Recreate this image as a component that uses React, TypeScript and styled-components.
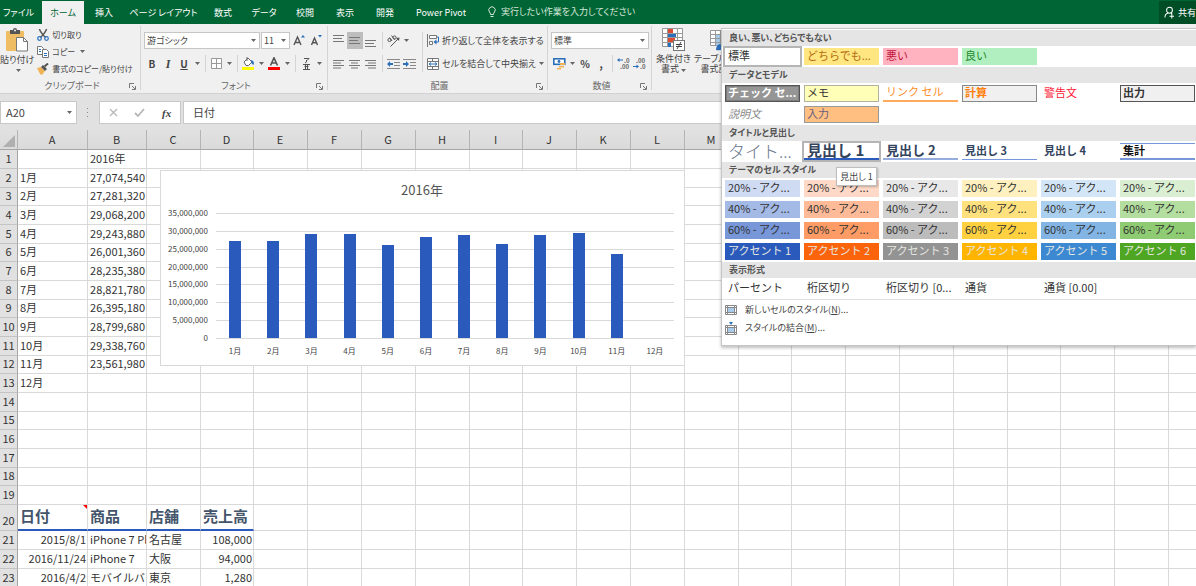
import React from "react";
import styled, { createGlobalStyle, css } from "styled-components";

const Global = createGlobalStyle`
  *, *::before, *::after { box-sizing: border-box; }
  body { margin: 0; }
  body, button, input, select {
    font-family: "Noto Sans CJK JP", "Noto Sans", sans-serif;
    color: #444;
  }
  button { margin: 0; padding: 0; border: 0; background: none; }
`;

/* ---------- frame ---------- */

const Window = styled.div`
  display: flex;
  flex-direction: column;
  height: 100vh;
  overflow: hidden;
  position: relative;
  background: #fff;
`;

const uiText = css`
  font-size: 9px;
  line-height: 12px;
  font-feature-settings: "palt";
  white-space: nowrap;
`;

const TabBar = styled.nav`
  display: flex;
  align-items: stretch;
  height: 24px;
  flex: none;
  background: #006534;
`;

const Tab = styled.button<{ $active?: boolean; $w: number }>`
  ${uiText}
  flex: none;
  width: ${(p) => p.$w}px;
  margin-top: 1px;
  text-align: center;
  color: ${(p) => (p.$active ? "#006534" : "#fff")};
  background: ${(p) => (p.$active ? "#f0f0f0" : "transparent")};
`;

const FileTab = styled(Tab)`
  padding-right: 5px;
`;

const TellMe = styled.label`
  ${uiText}
  display: flex;
  align-items: center;
  flex: 1;
  gap: 5px;
  margin-left: 11px;
  color: #d5e8dc;
`;

const TellInput = styled.input`
  ${uiText}
  flex: 1;
  min-width: 0;
  padding: 0;
  border: 0;
  outline: 0;
  background: transparent;
  &::placeholder { color: #d5e8dc; opacity: 1; }
`;

const Share = styled.button`
  ${uiText}
  display: flex;
  align-items: center;
  gap: 3px;
  width: 37px;
  margin-top: 1px;
  padding-left: 5px;
  overflow: hidden;
  color: #fff;
  background: #004d26;
`;

/* ---------- ribbon ---------- */

const Ribbon = styled.div`
  display: flex;
  flex: none;
  height: 70px;
  background: #f0f0f0;
  border-bottom: 1px solid #d2d2d2;
`;

const Group = styled.section<{ $w?: number }>`
  position: relative;
  display: flex;
  flex-direction: column;
  justify-content: space-between;
  flex: none;
  ${(p) => p.$w && `width: ${p.$w}px;`}
  padding-left: 3px;
  &::after {
    content: "";
    position: absolute;
    top: 2px;
    right: 0;
    bottom: 3px;
    width: 1px;
    background: #d4d4d4;
  }
`;

const Rows = styled.div`
  display: flex;
  flex-direction: column;
  gap: 6px;
  padding-top: 8px;
`;

const Row = styled.div<{ $gap?: number }>`
  display: flex;
  align-items: center;
  height: 17px;
  gap: ${(p) => p.$gap ?? 0}px;
`;

const Columns = styled.div`
  display: flex;
`;

const IconZone = styled(Rows)`
  width: 88px;
`;

const Foot = styled.footer`
  ${uiText}
  display: grid;
  grid-template-columns: 12px 1fr 12px;
  align-items: center;
  height: 14px;
  text-align: center;
  color: #666;
`;

const FootLabel = styled.span`
  grid-column: 2;
`;

const Tool = styled.button<{ $on?: boolean }>`
  display: flex;
  align-items: center;
  justify-content: center;
  flex: none;
  width: 16px;
  height: 17px;
  font-size: 10px;
  line-height: 16px;
  background: ${(p) => (p.$on ? "#bdbdbd" : "transparent")};
`;

const BoldTool = styled(Tool)`font-weight: 700;`;
const ItalicTool = styled(BoldTool)`
  font-family: "Liberation Serif", serif;
  font-style: italic;
  font-size: 12px;
`;
const UnderTool = styled(BoldTool)`text-decoration: underline;`;

const ArrowTool = styled(Tool)`width: 10px;`;

const Sep = styled.span`
  flex: none;
  width: 6px;
  height: 17px;
  background: linear-gradient(#d4d4d4, #d4d4d4) 3px 0 / 1px 100% no-repeat;
`;

const TallSep = styled(Sep)`
  height: 40px;
  margin-top: 8px;
`;

const TextTool = styled.button`
  ${uiText}
  display: flex;
  align-items: center;
  gap: 3px;
  height: 17px;
  padding: 0 0 0 2px;
`;

const ClipTool = styled(TextTool)`
  font-size: 8px;
`;

const SelectBox = styled.span<{ $w: number }>`
  position: relative;
  display: flex;
  align-items: center;
  width: ${(p) => p.$w}px;
  height: 17px;
  background: #fff;
  border: 1px solid #c6c6c6;
  & > svg { position: absolute; right: 3px; pointer-events: none; }
`;

const Select = styled.select`
  ${uiText}
  appearance: none;
  width: 100%;
  height: 15px;
  padding: 0 0 0 2px;
  border: 0;
  outline: 0;
  background: transparent;
`;

const BigTool = styled.button`
  ${uiText}
  display: flex;
  flex-direction: column;
  align-items: center;
  line-height: 10px;
  padding-top: 4px;
  & > svg { margin-bottom: 3px; }
`;

const BigArrow = styled.span`
  display: inline-flex;
  align-items: center;
  height: 10px;
  padding-left: 2px;
`;

const Clipboard = styled.div`
  display: flex;
  margin-left: -3px;
  gap: 1px;
`;

const ClipList = styled.div`
  display: flex;
  flex-direction: column;
  padding-top: 2px;
`;

const StylesGroup = styled.div`
  display: flex;
  align-items: flex-start;
  gap: 3px;
  padding-left: 4px;
`;

/* ---------- formula bar ---------- */

const FormulaBar = styled.div`
  display: flex;
  flex: none;
  align-items: center;
  height: 36px;
  padding-top: 1px;
  background: #e1e1e1;
`;

const NameBox = styled.label`
  display: flex;
  align-items: center;
  justify-content: space-between;
  width: 77px;
  height: 23px;
  padding-right: 4px;
  background: #fff;
  border: 1px solid #c8c8c8;
`;

const BarInput = styled.input`
  min-width: 0;
  flex: 1;
  height: 21px;
  padding: 0 5px 1px;
  border: 0;
  outline: 0;
  font-size: 11px;
  background: transparent;
`;

const Dots = styled.span`
  display: flex;
  justify-content: center;
  width: 22px;
`;

const FxBox = styled.div`
  display: flex;
  align-items: center;
  justify-content: space-around;
  width: 82px;
  height: 23px;
  margin-right: 2px;
  background: #fff;
  border: 1px solid #c8c8c8;
`;

const Fx = styled(Tool)`
  font-family: "Liberation Serif", serif;
  font-style: italic;
  font-weight: 700;
  font-size: 11px;
`;

const FormulaBox = styled.label`
  display: flex;
  flex: 1;
  height: 23px;
  padding-left: 4px;
  background: #fff;
  border: 1px solid #c8c8c8;
`;

/* ---------- sheet ---------- */

const Sheet = styled.main`
  position: relative;
  flex: 1;
  min-height: 0;
  overflow: hidden;
`;

const Grid = styled.table`
  table-layout: fixed;
  width: 0;
  border-collapse: separate;
  border-spacing: 0;
  font-size: 11px;
  line-height: 15px;
  color: #333;
`;

const Col = styled.col<{ $w: number }>`
  width: ${(p) => p.$w}px;
`;

const ColHead = styled.th`
  height: 20px;
  padding: 0 1px 1px 0;
  font-weight: 400;
  color: #333;
  background: linear-gradient(#e1e1e1, #dadada);
  border-right: 1px solid #b4b4b4;
  border-bottom: 1px solid #a6a6a6;
`;

const Corner = styled(ColHead)`
  vertical-align: bottom;
  text-align: right;
  line-height: 0;
`;

const Tr = styled.tr<{ $h: number }>`
  height: ${(p) => p.$h}px;
`;

const RowHead = styled.th`
  padding: 0 0 2px;
  font-weight: 400;
  vertical-align: bottom;
  background: #e1e1e1;
  border-right: 1px solid #a6a6a6;
  border-bottom: 1px solid #c4c4c4;
`;

const Td = styled.td<{ $num?: boolean; $head?: boolean }>`
  position: relative;
  padding: 0 1px 2px ${(p) => (p.$num ? 0 : 2)}px;
  overflow: hidden;
  white-space: nowrap;
  vertical-align: bottom;
  text-align: ${(p) => (p.$num ? "right" : "left")};
  border-right: 1px solid #d9d9d9;
  border-bottom: 1px solid #d9d9d9;
  ${(p) =>
    p.$head &&
    css`
      font-size: 15px;
      line-height: 22px;
      font-weight: 700;
      color: #44546a;
      border-bottom: 2px solid #2a5bbc;
    `}
`;

const Note = styled.span`
  position: absolute;
  top: 0;
  right: 0;
  border-top: 4px solid #f00;
  border-left: 4px solid transparent;
`;

const ChartFrame = styled.figure`
  position: absolute;
  left: 160px;
  top: 40px;
  width: 525px;
  height: 196px;
  margin: 0;
  background: #fff;
  border: 1px solid #d9d9d9;
`;

/* ---------- style gallery ---------- */

const Gallery = styled.aside`
  position: absolute;
  top: 28px;
  right: 0;
  width: 475px;
  padding-top: 1px;
  background: #fff;
  border: 1px solid #c6c6c6;
  border-right: 0;
  box-shadow: 0 2px 3px rgba(0, 0, 0, 0.25);
`;

const Band = styled.h2`
  ${uiText}
  margin: 0;
  height: 16px;
  line-height: 15px;
  padding-left: 7px;
  font-weight: 700;
  color: #555;
  background: #e5e5e5;
`;

const Swatches = styled.div`
  display: grid;
  grid-template-columns: repeat(6, 75px);
  grid-auto-rows: 17px;
  gap: 4px;
  padding: 2px 0 2px 3px;
`;

type Look = {
  $bg?: string;
  $fg?: string;
  $border?: string;
  $top?: string;
  $bottom?: string;
  $bw?: number;
  $size?: number;
  $bold?: boolean;
  $italic?: boolean;
  $light?: boolean;
  $ring?: boolean;
};

const Swatch = styled.button<Look>`
  height: 17px;
  padding: 0 0 2px 3px;
  overflow: ${(p) => (p.$ring ? "visible" : "hidden")};
  display: flex;
  align-items: center;
  white-space: nowrap;
  text-align: left;
  font-size: ${(p) => p.$size ?? 11}px;
  line-height: 15px;
  font-weight: ${(p) => (p.$bold ? 700 : p.$light ? 300 : 400)};
  font-style: ${(p) => (p.$italic ? "italic" : "normal")};
  color: ${(p) => p.$fg ?? "#333"};
  background: ${(p) => p.$bg ?? "transparent"};
  ${(p) => p.$border && `border: 1px solid ${p.$border}; padding-left: 2px;`}
  ${(p) => p.$border && p.$bold && p.$bg === "#969696" && `box-shadow: inset 0 0 0 1px #7d7d7d;`}
  ${(p) => p.$top && `border-top: 1px solid ${p.$top};`}
  ${(p) => p.$bottom && `border-bottom: ${p.$bw ?? 2}px solid ${p.$bottom};`}
  ${(p) => p.$ring && `outline: 2px solid #b5b5b5;`}
`;

const MenuList = styled.div`
  display: flex;
  flex-direction: column;
  padding: 1px 0 8px;
  border-top: 1px solid #e1e1e1;
`;

const MenuItem = styled.button`
  ${uiText}
  display: flex;
  align-items: center;
  gap: 8px;
  height: 18px;
  padding-left: 3px;
`;

const Tip = styled.span`
  ${uiText}
  position: absolute;
  left: 114px;
  top: 138px;
  width: 41px;
  height: 19px;
  line-height: 17px;
  text-align: center;
  background: #fff;
  border: 1px solid #bebebe;
  box-shadow: 1px 1px 2px rgba(0, 0, 0, 0.25);
`;

/* ---------- icons ---------- */

const Caret = () => (
  <svg width="5" height="3" viewBox="0 0 5 3"><path d="M0 0h5L2.5 3z" fill="#666" /></svg>
);

const Launcher = () => (
  <svg width="7" height="7" viewBox="0 0 7 7" fill="none" stroke="#777">
    <path d="M.5 5V.5H5M3 3l3 3M6.500 3v3.500H3" />
  </svg>
);

const Lines = ({ rows, top, align = "l" }: { rows: number[]; top: number; align?: string }) => (
  <svg width="12" height="14" viewBox="0 0 12 14">
    {rows.map((w, i) => (
      <rect key={i} x={align === "l" ? 0 : align === "c" ? (11 - w) / 2 : 11 - w} y={top + i * 3 - (rows.length > 3 ? i * 0.5 : 0)} width={w} height="1" fill="#777" />
    ))}
  </svg>
);

const Indent = ({ out }: { out?: boolean }) => (
  <svg width="13" height="12" viewBox="0 0 13 12">
    <path d="M0 1.500h13M7 4.500h6M7 7.500h6M0 10.500h13" stroke="#888" />
    <path d={out ? "M0 6l3-3v2h3v2H3v2z" : "M6 6L3 3v2H0v2h3v2z"} fill="#2a6fba" />
  </svg>
);

const PasteIcon = () => (
  <svg width="22" height="24" viewBox="0 0 22 24">
    <rect x="0" y="3" width="18" height="20" rx="1" fill="#efbd63" />
    <path d="M4 2h3a2 2 0 0 1 4 0h3v4H4z" fill="#555" />
    <circle cx="9" cy="2.400" r="1" fill="#f0f0f0" />
    <path d="M10.500 9.500h7l4 4v9.500h-11z" fill="#fff" stroke="#777" />
    <path d="M17.500 9.500v4h4" fill="none" stroke="#777" />
  </svg>
);

const CutIcon = () => (
  <svg width="12" height="12" viewBox="0 0 12 12" fill="none">
    <path d="M2.500 0C3 3 6 6 8.500 8.500M9.500 0C9 3 6 6 3.500 8.500" stroke="#555" strokeWidth="1.500" />
    <circle cx="2.500" cy="9.500" r="1.800" stroke="#2a6fba" strokeWidth="1.200" />
    <circle cx="9.500" cy="9.500" r="1.800" stroke="#2a6fba" strokeWidth="1.200" />
  </svg>
);

const CopyIcon = () => (
  <svg width="12" height="12" viewBox="0 0 12 12" fill="#fff" stroke="#777">
    <path d="M.5 .5h4l2 2v6h-6z" />
    <path d="M5.500 3.500h4l2 2v6h-6z" />
    <path d="M2 3.500h2M2 5.500h2M7 7.500h3M7 9.500h3" stroke="#2a6fba" />
  </svg>
);

const BrushIcon = () => (
  <svg width="12" height="12" viewBox="0 0 12 12">
    <path d="M0 5l4-1 4 4-3 4-2-1z" fill="#efb356" />
    <path d="M4 4l2-2 4 4-2 2z" fill="#555" />
    <path d="M7.500 3.500L11 .5" stroke="#555" strokeWidth="2" />
  </svg>
);

const GrowA = ({ small }: { small?: boolean }) => (
  <svg width="12" height="14" viewBox="0 0 12 14">
    {small ? (
      <path d="M1.500 11L4.500 4l3 7M2.500 8.700h4" fill="none" stroke="#555" strokeWidth="1.400" />
    ) : (
      <path d="M1 11L4.500 3L8 11M2.300 8.500h4.500" fill="none" stroke="#555" strokeWidth="1.400" />
    )}
    <path d={small ? "M8 1h4l-2 2.500z" : "M8 3.500h4l-2-2.500z"} fill="#2a6fba" />
  </svg>
);

const BorderIcon = () => (
  <svg width="11" height="11" viewBox="0 0 11 11" fill="#fff" stroke="#999">
    <path d="M.5 .5h10v10H.5zM5.500 .5v10M.5 5.500h10" />
  </svg>
);

const FillIcon = () => (
  <svg width="13" height="13" viewBox="0 0 13 13">
    <path d="M2 5l4-4 4 4-3.500 3.500H4z" fill="#fff" stroke="#666" />
    <path d="M5 4V0" stroke="#666" />
    <path d="M9 3q4 1 2.500 5Q9 7 9 3z" fill="#2a6fba" />
    <rect y="10" width="12" height="3" fill="#ff0" />
  </svg>
);

const FontColorIcon = () => (
  <svg width="12" height="13" viewBox="0 0 12 13">
    <path d="M2.500 8.500L6 .8l3.500 7.700M3.800 6h4.400" fill="none" stroke="#555" strokeWidth="1.600" />
    <rect y="10" width="12" height="3" fill="#f00" />
  </svg>
);

const RubyIcon = () => (
  <svg width="7" height="13" viewBox="0 0 7 13" fill="none" stroke="#555">
    <path d="M1 1.500h5L4 3.500M3.500 3v2L2 6M0 7.500h7M1.500 9.500h4M0 12.500h7M2.500 7.500v5M4.500 7.500v5" />
  </svg>
);

const OrientIcon = () => (
  <svg width="13" height="13" viewBox="0 0 13 13" fill="none" stroke="#555">
    <circle cx="2.500" cy="6" r="1.600" />
    <path d="M2.500 3.500L5 7M4.500 1.500L8 6" />
    <circle cx="7.500" cy="3.500" r="1.600" />
    <path d="M3.500 12.500l8-8" />
    <path d="M12.500 3.500L12 7 9 4z" fill="#555" stroke="none" />
  </svg>
);

const WrapIcon = () => (
  <svg width="12" height="13" viewBox="0 0 12 13" fill="none">
    <path d="M.5 0v13" stroke="#777" />
    <path d="M2.500 1.500h7v3h-7z" fill="#fff" stroke="#777" />
    <path d="M2.500 7.500h3v3h-3z" fill="#fff" stroke="#777" />
    <path d="M10 3h1.500v5H8" stroke="#2a6fba" />
    <path d="M9.500 5.500L6.500 8l3 2.500z" fill="#2a6fba" />
  </svg>
);

const MergeIcon = () => (
  <svg width="12" height="12" viewBox="0 0 12 12" fill="none">
    <path d="M.5 .5h11v11H.5z" fill="#fff" />
    <path d="M.5 .5h11v11H.5zM.5 3.500h11M.5 8.500h11M5.500 .5v3M5.500 8.500v3" stroke="#777" />
    <path d="M2 6h8M4 4.500L2 6l2 1.500M8 4.500L10 6 8 7.500" stroke="#2a6fba" />
  </svg>
);

const MoneyIcon = () => (
  <svg width="13" height="13" viewBox="0 0 13 13">
    <rect x=".8" y="1.800" width="11" height="5.500" fill="#fff" stroke="#2a6fba" strokeWidth="1.600" />
    <circle cx="6" cy="4.500" r="1.400" fill="#2a6fba" />
    <path d="M7 6h5v2H7zM6 9h5v1.500H6zM4 11h4v1.500H4z" fill="#efb356" />
  </svg>
);

const DigitsText = styled.text`
  font: 700 6px "Noto Sans CJK JP", sans-serif;
  fill: #666;
`;

const Decimal = ({ inc }: { inc?: boolean }) => (
  <svg width="13" height="13" viewBox="0 0 13 13">
    <DigitsText x={inc ? 7 : 3} y="6">{inc ? ".0" : ".00"}</DigitsText>
    <DigitsText x={inc ? 3 : 7} y="12">{inc ? ".00" : ".0"}</DigitsText>
    {inc ? (
      <path d="M0 3l2.500-2v1.500H6v1H2.500V5z" fill="#2a6fba" />
    ) : (
      <path d="M6 9.500L3.500 7.500V9H0v1h3.500v1.500z" fill="#2a6fba" />
    )}
  </svg>
);

const CondIcon = () => (
  <svg width="23" height="23" viewBox="0 0 23 23">
    <path d="M.5 .5h20v18H.5zM5.500 .5v18M15.500 .5v18M.5 5.500h20M.5 9.500h20M.5 14.500h20" fill="#fff" stroke="#999" />
    <rect x="6" y="1" width="5" height="4" fill="#dc4b32" />
    <rect x="6" y="6" width="8" height="3" fill="#2a6fba" />
    <rect x="6" y="10" width="7" height="4" fill="#dc4b32" />
    <rect x="6" y="15" width="3" height="4" fill="#2a6fba" />
    <rect x="11.500" y="12.500" width="11" height="10" fill="#fff" stroke="#777" />
    <path d="M14 16.500h6M14 18.500h6M19 14l-4 7" stroke="#444" fill="none" />
  </svg>
);

const TableIcon = () => (
  <svg width="24" height="23" viewBox="0 0 24 23">
    <path d="M.5 2.500h20v15H.5z" fill="#fff" />
    <path d="M5 6h16v12H5z" fill="#a9cbea" />
    <path d="M.5 2.500h20v15H.5zM5.500 2.500v15M10.500 2.500v15M15.500 2.500v15M.5 6.500h20M.5 10.500h20M.5 14.500h20" fill="none" stroke="#999" />
    <path d="M6 22q0-5 4-6l4 4q-2 3-8 2z" fill="#2a6fba" />
    <path d="M12 17l9-9" stroke="#666" strokeWidth="2" />
  </svg>
);

const BulbIcon = () => (
  <svg width="8" height="12" viewBox="0 0 8 12" fill="none" stroke="#d5e8dc">
    <path d="M2.500 8.500Q2.500 7 1.500 6A3.200 3.200 0 1 1 6.500 6Q5.500 7 5.500 8.500zM2.500 10.500h3" />
  </svg>
);

const PersonIcon = () => (
  <svg width="12" height="13" viewBox="0 0 12 13" fill="none" stroke="#fff" strokeWidth="1.100">
    <circle cx="6" cy="4" r="3.200" />
    <path d="M1 12q0-4 3.500-5M7.500 7L9 8M6 10.500h5M8.500 8v5" />
  </svg>
);

const NewStyleIcon = () => (
  <svg width="12" height="10" viewBox="0 0 12 10" fill="#fff" stroke="#888">
    <path d="M.5 .5h11v9H.5zM.5 2.500h11M.5 7.500h11M2.500 .5v9M9.500 .5v9" />
    <path d="M3 3h6v4H3z" fill="#a9cbea" stroke="none" />
  </svg>
);

const MergeStyleIcon = () => (
  <svg width="12" height="13" viewBox="0 0 12 13" fill="#fff" stroke="#888">
    <path d="M.5 3.500h11v9H.5zM.5 5.500h11M.5 10.500h11M2.500 3.500v9M9.500 3.500v9" />
    <path d="M3 6h6v4H3z" fill="#a9cbea" stroke="none" />
    <path d="M4 0h4L6 3z" fill="#2a6fba" stroke="none" />
  </svg>
);

/* ---------- chart ---------- */

const sales = [27074540, 27281320, 29068200, 29243880, 26001360, 28235380, 28821780, 26395180, 28799680, 29338760, 23561980];

const AxisText = styled.text`
  font: 400 8px "Noto Sans CJK JP", sans-serif;
  fill: #444;
`;
const ChartTitle = styled.text`
  font: 400 13px "Noto Sans CJK JP", sans-serif;
  fill: #555;
`;

const Chart = () => {
  const x0 = 55;
  const base = 167;
  const plotH = 125;
  const step = 458 / 12;
  return (
    <svg width="523" height="194" viewBox="0 0 523 194" role="img" aria-label="2016年">
      <ChartTitle x="261" y="24" textAnchor="middle">2016年</ChartTitle>
      {Array.from({ length: 8 }, (_, i) => {
        const y = Math.round(base - (i * plotH) / 7);
        return (
          <g key={i}>
            <rect x={x0} y={y} width="458" height="1" fill="#d9d9d9" />
            <AxisText x="47" y={y + 3} textAnchor="end">{(i * 5000000).toLocaleString("en-US")}</AxisText>
          </g>
        );
      })}
      {Array.from({ length: 12 }, (_, i) => {
        const cx = x0 + step * (i + 0.5);
        const h = sales[i] ? Math.round((sales[i] / 35000000) * plotH) : 0;
        return (
          <g key={i}>
            <rect x={Math.round(cx) - 6} y={base - h} width="12" height={h} fill="#2a5bbc" />
            <AxisText x={cx} y="183" textAnchor="middle">{i + 1}月</AxisText>
          </g>
        );
      })}
    </svg>
  );
};

/* ---------- data ---------- */

const tabs: [string, number][] = [
  ["挿入", 40],
  ["ページ レイアウト", 79],
  ["数式", 40],
  ["データ", 42],
  ["校閲", 40],
  ["表示", 40],
  ["開発", 40],
  ["Power Pivot", 72],
];

const columns = "ABCDEFGHIJKLMNOPQRSTUV".split("");
const colWidth = (i: number) => (i === 0 ? 70 : i === 1 ? 59 : i > 2 && (i - 3) % 5 === 0 ? 53 : 54);
const rowHeight = (n: number) => (n === 20 ? 26 : n > 20 ? 19 : n % 3 === 0 ? 18 : 19);

const cells: Record<number, string[]> = {
  1: ["", "2016年"],
  13: ["12月"],
  20: ["日付", "商品", "店舗", "売上高"],
  21: ["2015/8/1", "iPhone 7 Plus", "名古屋", "108,000"],
  22: ["2016/11/24", "iPhone 7", "大阪", "94,000"],
  23: ["2016/4/2", "モバイルバッテリー", "東京", "1,280"],
};
sales.forEach((v, i) => {
  cells[i + 2] = [`${i + 1}月`, v.toLocaleString("en-US")];
});

const isNumber = (t: string) => /^[\d,/]+$/.test(t);

type Style = [string, Look];

const accents = ["#2a5bbc", "#fb640b", "#939393", "#ffb400", "#3c89d2", "#4ea623"];
const tints: [string, string[]][] = [
  ["20% - アク...", ["#cfdaf3", "#ffd9c7", "#e8e8e8", "#fff0bf", "#d3e6f8", "#daeed1"]],
  ["40% - アク...", ["#a3b9e6", "#ffbb98", "#d2d2d2", "#ffe17d", "#abcfef", "#b4de9f"]],
  ["60% - アク...", ["#7797d9", "#ff9c66", "#bcbcbc", "#ffd141", "#82b5e4", "#8fcb73"]],
];

const gallery: { title: string; items: Style[] }[] = [
  {
    title: "良い、悪い、どちらでもない",
    items: [
      ["標準", { $ring: true }],
      ["どちらでも...", { $bg: "#ffe680", $fg: "#b36b10" }],
      ["悪い", { $bg: "#ffb3c0", $fg: "#c2143a" }],
      ["良い", { $bg: "#b1efc1", $fg: "#1f8a2c" }],
    ],
  },
  {
    title: "データとモデル",
    items: [
      ["チェック セ...", { $bg: "#969696", $fg: "#fff", $border: "#555", $bold: true }],
      ["メモ", { $bg: "#ffffb8", $border: "#b2b2a2" }],
      ["リンク セル", { $fg: "#ff8f2a", $bottom: "#ffaa5c" }],
      ["計算", { $bg: "#f0f0f0", $fg: "#ff7f0a", $border: "#888", $bold: true }],
      ["警告文", { $fg: "#ff1a38" }],
      ["出力", { $bg: "#f0f0f0", $border: "#555", $bold: true }],
      ["説明文", { $fg: "#888", $italic: true }],
      ["入力", { $bg: "#ffbf80", $fg: "#666080", $border: "#999" }],
    ],
  },
  {
    title: "タイトルと見出し",
    items: [
      ["タイト...", { $fg: "#66758a", $size: 17, $light: true }],
      ["見出し 1", { $fg: "#33435c", $size: 15, $bold: true, $bottom: "#2a5bbc", $ring: true }],
      ["見出し 2", { $fg: "#33435c", $size: 13, $bold: true, $bottom: "#94adde" }],
      ["見出し 3", { $fg: "#33435c", $bold: true, $bottom: "#7797d9", $bw: 1 }],
      ["見出し 4", { $fg: "#33435c", $bold: true }],
      ["集計", { $fg: "#111", $bold: true, $top: "#7797d9", $bottom: "#7797d9" }],
    ],
  },
  {
    title: "テーマのセル スタイル",
    items: [
      ...tints.flatMap(([label, colors]) => colors.map((c): Style => [label, { $bg: c }])),
      ...accents.map((c, i): Style => [`アクセント ${i + 1}`, { $bg: c, $fg: "#e6e6e0" }]),
    ],
  },
  {
    title: "表示形式",
    items: [
      ["パーセント", {}],
      ["桁区切り", {}],
      ["桁区切り [0...", {}],
      ["通貨", {}],
      ["通貨 [0.00]", {}],
    ],
  },
];

const Footer = ({ label }: { label: string }) => (
  <Foot>
    <FootLabel>{label}</FootLabel>
    <Launcher />
  </Foot>
);

const Drop = ({ label, value, w }: { label: string; value: string; w: number }) => (
  <SelectBox $w={w}>
    <Select aria-label={label} defaultValue={value}>
      <option>{value}</option>
    </Select>
    <Caret />
  </SelectBox>
);

const Arrow = () => <ArrowTool aria-label="その他"><Caret /></ArrowTool>;

export default function App() {
  return (
    <Window>
      <Global />
      <TabBar>
        <FileTab $w={42}>ファイル</FileTab>
        <Tab $active $w={42}>ホーム</Tab>
        {tabs.map(([t, w]) => (
          <Tab key={t} $w={w}>{t}</Tab>
        ))}
        <TellMe>
          <BulbIcon />
          <TellInput aria-label="操作アシスト" placeholder="実行したい作業を入力してください" />
        </TellMe>
        <Share><PersonIcon />共有</Share>
      </TabBar>

      <Ribbon>
        <Group $w={141}>
          <Clipboard>
            <BigTool><PasteIcon />貼り付け<BigArrow><Caret /></BigArrow></BigTool>
            <ClipList>
              <ClipTool><CutIcon />切り取り</ClipTool>
              <ClipTool><CopyIcon />コピー<BigArrow><Caret /></BigArrow></ClipTool>
              <ClipTool><BrushIcon />書式のコピー/貼り付け</ClipTool>
            </ClipList>
          </Clipboard>
          <Footer label="クリップボード" />
        </Group>

        <Group $w={187}>
          <Rows>
            <Row $gap={1}>
              <Drop label="フォント" value="游ゴシック" w={116} />
              <Drop label="フォント サイズ" value="11" w={29} />
              <Tool aria-label="拡大"><GrowA /></Tool>
              <Tool aria-label="縮小"><GrowA small /></Tool>
            </Row>
            <Row>
              <BoldTool>B</BoldTool>
              <ItalicTool>I</ItalicTool>
              <UnderTool>U</UnderTool>
              <Arrow />
              <Sep />
              <Tool aria-label="罫線"><BorderIcon /></Tool>
              <Arrow />
              <Sep />
              <Tool aria-label="塗りつぶし"><FillIcon /></Tool>
              <Arrow />
              <Tool aria-label="フォントの色"><FontColorIcon /></Tool>
              <Arrow />
              <Sep />
              <Tool aria-label="ふりがな"><RubyIcon /></Tool>
              <Arrow />
            </Row>
          </Rows>
          <Footer label="フォント" />
        </Group>

        <Group $w={220}>
          <Columns>
            <IconZone>
              <Row>
                <Tool aria-label="上揃え"><Lines rows={[11, 9, 11]} top={1} /></Tool>
                <Tool $on aria-label="上下中央揃え"><Lines rows={[11, 9, 11]} top={3} /></Tool>
                <Tool aria-label="下揃え"><Lines rows={[11, 9, 11]} top={6} /></Tool>
                <Sep />
                <Tool aria-label="方向"><OrientIcon /></Tool>
                <Arrow />
              </Row>
              <Row>
                <Tool aria-label="左揃え"><Lines rows={[11, 8, 11, 8]} top={3} /></Tool>
                <Tool aria-label="中央揃え"><Lines rows={[11, 7, 11, 7]} top={3} align="c" /></Tool>
                <Tool aria-label="右揃え"><Lines rows={[11, 8, 11, 8]} top={3} align="r" /></Tool>
                <Sep />
                <Tool aria-label="インデントを減らす"><Indent out /></Tool>
                <Tool aria-label="インデントを増やす"><Indent /></Tool>
              </Row>
            </IconZone>
            <TallSep />
            <Rows>
              <TextTool><WrapIcon />折り返して全体を表示する</TextTool>
              <Row>
                <TextTool><MergeIcon />セルを結合して中央揃え</TextTool>
                <Arrow />
              </Row>
            </Rows>
          </Columns>
          <Footer label="配置" />
        </Group>

        <Group $w={104}>
          <Rows>
            <Row><Drop label="表示形式" value="標準" w={98} /></Row>
            <Row>
              <Tool aria-label="通貨"><MoneyIcon /></Tool>
              <Arrow />
              <BoldTool>%</BoldTool>
              <BoldTool>,</BoldTool>
              <Sep />
              <Tool aria-label="小数点以下の表示桁数を増やす"><Decimal inc /></Tool>
              <Tool aria-label="小数点以下の表示桁数を減らす"><Decimal /></Tool>
            </Row>
          </Rows>
          <Footer label="数値" />
        </Group>

        <StylesGroup>
          <BigTool>
            <CondIcon />
            <span>条件付き</span>
            <span>書式<BigArrow><Caret /></BigArrow></span>
          </BigTool>
          <BigTool>
            <TableIcon />
            <span>テーブルとして</span>
            <span>書式設定<BigArrow><Caret /></BigArrow></span>
          </BigTool>
        </StylesGroup>
      </Ribbon>

      <FormulaBar>
        <NameBox>
          <BarInput aria-label="名前ボックス" defaultValue="A20" />
          <Caret />
        </NameBox>
        <Dots>
          <svg width="2" height="9" viewBox="0 0 2 9"><path d="M0 0h1v1H0zM0 4h1v1H0zM0 8h1v1H0z" fill="#888" /></svg>
        </Dots>
        <FxBox>
          <Tool aria-label="キャンセル">
            <svg width="9" height="9" viewBox="0 0 9 9"><path d="M1 1l7 7M8 1L1 8" stroke="#b8b8b8" strokeWidth="1.300" /></svg>
          </Tool>
          <Tool aria-label="入力">
            <svg width="11" height="9" viewBox="0 0 11 9"><path d="M1 5l3 3 6-7" fill="none" stroke="#b8b8b8" strokeWidth="1.800" /></svg>
          </Tool>
          <Fx>fx</Fx>
        </FxBox>
        <FormulaBox>
          <BarInput aria-label="数式バー" defaultValue="日付" />
        </FormulaBox>
      </FormulaBar>

      <Sheet>
        <Grid>
          <colgroup>
            <Col $w={18} />
            {columns.map((c, i) => <Col key={c} $w={colWidth(i)} />)}
          </colgroup>
          <thead>
            <tr>
              <Corner>
                <svg width="14" height="14" viewBox="0 0 14 14"><path d="M13 1v12H1z" fill="#b0b0b0" /></svg>
              </Corner>
              {columns.map((c) => <ColHead key={c}>{c}</ColHead>)}
            </tr>
          </thead>
          <tbody>
            {Array.from({ length: 23 }, (_, r) => r + 1).map((n) => (
              <Tr key={n} $h={rowHeight(n)}>
                <RowHead>{n}</RowHead>
                {columns.map((c, i) => {
                  const text = cells[n]?.[i] ?? "";
                  return (
                    <Td key={c} $num={isNumber(text)} $head={n === 20 && i < 4}>
                      {text}
                      {n === 20 && i === 0 && <Note />}
                    </Td>
                  );
                })}
              </Tr>
            ))}
          </tbody>
        </Grid>
        <ChartFrame><Chart /></ChartFrame>
      </Sheet>

      <Gallery>
        {gallery.map((g) => (
          <section key={g.title}>
            <Band>{g.title}</Band>
            <Swatches>
              {g.items.map(([label, look], i) => (
                <Swatch key={i} {...look}>{label}</Swatch>
              ))}
            </Swatches>
          </section>
        ))}
        <MenuList>
          <MenuItem><NewStyleIcon /><span>新しいセルのスタイル(<u>N</u>)...</span></MenuItem>
          <MenuItem><MergeStyleIcon /><span>スタイルの結合(<u>M</u>)...</span></MenuItem>
        </MenuList>
        <Tip>見出し 1</Tip>
      </Gallery>
    </Window>
  );
}
